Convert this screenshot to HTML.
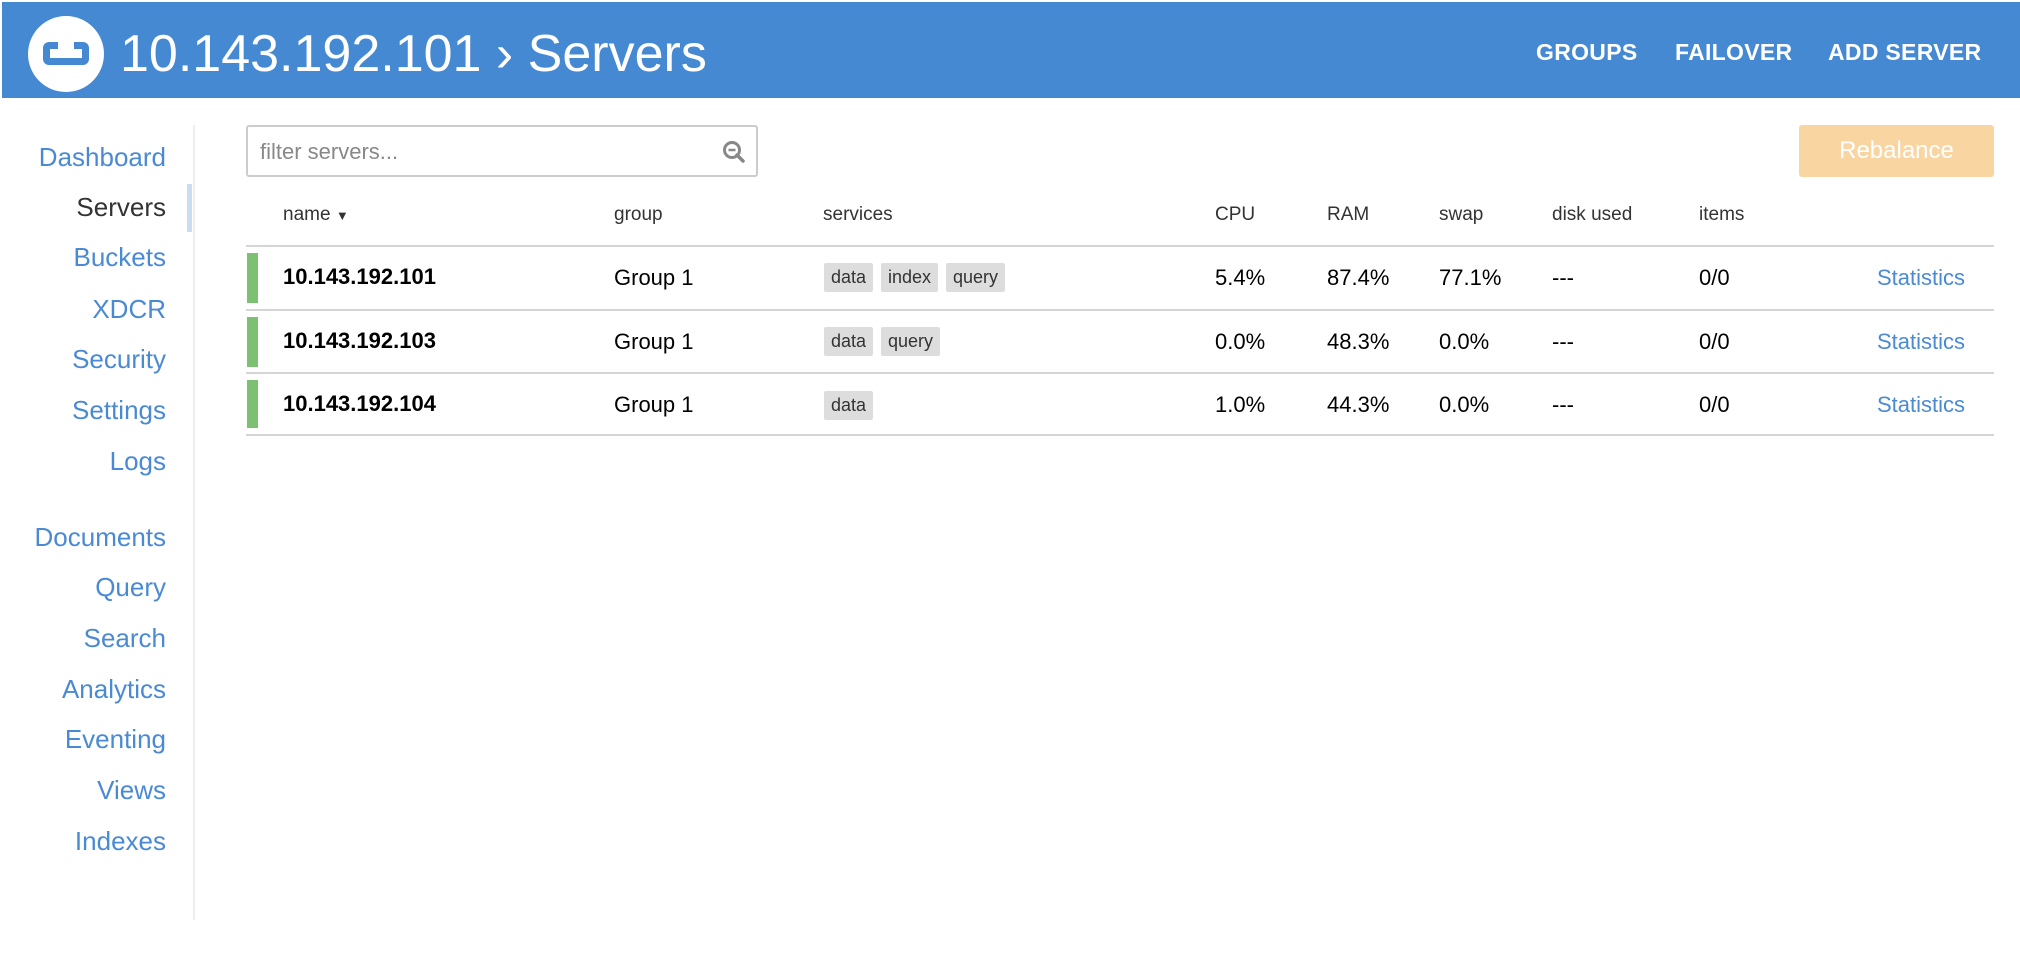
<!DOCTYPE html>
<html><head><meta charset="utf-8"><style>
*{margin:0;padding:0;box-sizing:border-box}
body{width:2020px;height:972px;background:#fff;font-family:"Liberation Sans",sans-serif;position:relative;overflow:hidden;color:#000}
.hdr{position:absolute;left:2px;top:2px;width:2018px;height:96px;background:#4689d3}
.logo{position:absolute;left:26px;top:14px;width:76px;height:76px;border-radius:50%;background:#fff}
.logo i{position:absolute;left:15px;top:26px;width:46px;height:23px;border:7px solid #4689d3;border-radius:6px}
.logo b{position:absolute;left:30px;top:26px;width:16px;height:8px;background:#fff}
.title{position:absolute;left:118px;top:20px;font-size:52px;color:#fff;line-height:64px}
.nav{position:absolute;top:37px;font-size:23px;color:#fff;font-weight:bold;letter-spacing:0.3px}
.side{position:absolute;right:1854px;font-size:26px;color:#4a8ad4;text-align:right;white-space:nowrap}
.vl{position:absolute;left:193px;top:125px;width:2px;height:795px;background:#eee}
.act{position:absolute;left:187px;top:184px;width:5px;height:48px;background:#c9dcf1}
.filter{position:absolute;left:246px;top:125px;width:512px;height:52px;border:2px solid #ccc;border-radius:3px;font-size:22px;color:#888;padding:12px 12px}
.reb{position:absolute;left:1799px;top:125px;width:195px;height:52px;background:#f9d6a1;border-radius:3px;color:#fff;font-size:24px;text-align:center;line-height:52px}
.th{position:absolute;top:204px;font-size:19px;color:#333}
.line{position:absolute;left:246px;width:1748px;height:2px;background:#d5d5d5}
.bar{position:absolute;left:247px;width:11px;background:#7cc072}
.c{position:absolute;font-size:22px;color:#000}
.tag{position:absolute;height:29px;background:#ddd;border-radius:2px;font-size:18px;line-height:29px;padding:0 7px;color:#333}
.st{position:absolute;font-size:22px;color:#4a8ad4}
</style></head><body>
<div class="hdr">
 <div class="logo"><i></i><b></b></div>
 <div class="title">10.143.192.101 › Servers</div>
 <div class="nav" style="left:1534px">GROUPS</div>
 <div class="nav" style="left:1673px">FAILOVER</div>
 <div class="nav" style="left:1826px">ADD SERVER</div>
</div>
<div class="vl"></div><div class="act"></div>
<div class="side" style="top:142px">Dashboard</div>
<div class="side" style="top:192px;color:#333">Servers</div>
<div class="side" style="top:242px">Buckets</div>
<div class="side" style="top:294px">XDCR</div>
<div class="side" style="top:344px">Security</div>
<div class="side" style="top:395px">Settings</div>
<div class="side" style="top:446px">Logs</div>
<div class="side" style="top:522px">Documents</div>
<div class="side" style="top:572px">Query</div>
<div class="side" style="top:623px">Search</div>
<div class="side" style="top:674px">Analytics</div>
<div class="side" style="top:724px">Eventing</div>
<div class="side" style="top:775px">Views</div>
<div class="side" style="top:826px">Indexes</div>
<div class="filter">filter servers...
 <svg style="position:absolute;right:10px;top:13px" width="24" height="24" viewBox="0 0 24 24"><circle cx="10" cy="10" r="7.5" fill="none" stroke="#888" stroke-width="3"/><line x1="15" y1="15" x2="21" y2="21" stroke="#888" stroke-width="3.5" stroke-linecap="round"/><line x1="6.5" y1="10" x2="13.5" y2="10" stroke="#888" stroke-width="2.5"/></svg></div>
<div class="reb">Rebalance</div>
<div class="th" style="left:283px">name <span style="font-size:13px">▼</span></div>
<div class="th" style="left:614px">group</div>
<div class="th" style="left:823px">services</div>
<div class="th" style="left:1215px">CPU</div>
<div class="th" style="left:1327px">RAM</div>
<div class="th" style="left:1439px">swap</div>
<div class="th" style="left:1552px">disk used</div>
<div class="th" style="left:1699px">items</div>
<div class="line" style="top:245px"></div>
<div class="line" style="top:309px"></div>
<div class="line" style="top:372px"></div>
<div class="line" style="top:434px"></div>
<div class="bar" style="top:253px;height:50px"></div>
<div class="bar" style="top:317px;height:50px"></div>
<div class="bar" style="top:380px;height:48px"></div>
<div class="c" style="left:283px;top:264px;font-weight:bold">10.143.192.101</div>
<div class="c" style="left:283px;top:328px;font-weight:bold">10.143.192.103</div>
<div class="c" style="left:283px;top:391px;font-weight:bold">10.143.192.104</div>
<div class="c" style="left:614px;top:265px">Group 1</div>
<div class="c" style="left:614px;top:329px">Group 1</div>
<div class="c" style="left:614px;top:392px">Group 1</div>
<div class="tag" style="left:824px;top:263px">data</div><div class="tag" style="left:881px;top:263px">index</div><div class="tag" style="left:946px;top:263px">query</div>
<div class="tag" style="left:824px;top:327px">data</div><div class="tag" style="left:881px;top:327px">query</div>
<div class="tag" style="left:824px;top:391px">data</div>
<div class="c" style="left:1215px;top:265px">5.4%</div><div class="c" style="left:1327px;top:265px">87.4%</div><div class="c" style="left:1439px;top:265px">77.1%</div><div class="c" style="left:1552px;top:265px">---</div><div class="c" style="left:1699px;top:265px">0/0</div>
<div class="c" style="left:1215px;top:329px">0.0%</div><div class="c" style="left:1327px;top:329px">48.3%</div><div class="c" style="left:1439px;top:329px">0.0%</div><div class="c" style="left:1552px;top:329px">---</div><div class="c" style="left:1699px;top:329px">0/0</div>
<div class="c" style="left:1215px;top:392px">1.0%</div><div class="c" style="left:1327px;top:392px">44.3%</div><div class="c" style="left:1439px;top:392px">0.0%</div><div class="c" style="left:1552px;top:392px">---</div><div class="c" style="left:1699px;top:392px">0/0</div>
<div class="st" style="left:1877px;top:265px">Statistics</div>
<div class="st" style="left:1877px;top:329px">Statistics</div>
<div class="st" style="left:1877px;top:392px">Statistics</div>
</body></html>
